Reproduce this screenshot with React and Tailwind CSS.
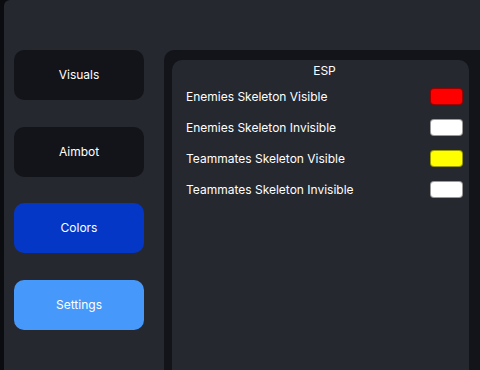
import React from "react";

const tabs = [
  { name: "Visuals", cls: "bg-[#131419]" },
  { name: "Aimbot", cls: "bg-[#131419]" },
  { name: "Colors", cls: "bg-[#0537c6]" },
  { name: "Settings", cls: "bg-[#4699fb]" },
];

const rows = [
  { label: "Enemies Skeleton Visible", color: "bg-[#ff0000]" },
  { label: "Enemies Skeleton Invisible", color: "bg-white" },
  { label: "Teammates Skeleton Visible", color: "bg-[#ffff00]" },
  { label: "Teammates Skeleton Invisible", color: "bg-white" },
];

const App = () => {
  return (
    <div
      className="h-[370px] w-[480px] overflow-hidden bg-[#0b0c10] pl-[4px]"
      style={{ fontFamily: "Inter, 'Noto Sans', sans-serif" }}
    >
      <div className="flex h-full rounded-tl-[6px] bg-[#262830] pt-[50px] pl-[10px]">
        {/* sidebar */}
        <div className="flex w-[130px] shrink-0 flex-col gap-[26.7px]">
          {tabs.map((t) => (
            <button
              key={t.name}
              className={`flex h-[50px] items-center justify-center rounded-[10px] text-[12px] text-white ${t.cls}`}
            >
              {t.name}
            </button>
          ))}
        </div>

        {/* content */}
        <div className="ml-[20px] flex-1 rounded-tl-[10px] bg-[#131419] pt-[10px] pl-[8px] pr-[11px]">
          <div className="h-full rounded-t-[10px] bg-[#262830] pl-[14px] pr-[6px]">
            <div className="pt-[3px] text-center text-[12px] leading-[16px] text-white">ESP</div>
            <div className="mt-[9px] flex flex-col gap-[14px]">
              {rows.map((r) => (
                <div key={r.label} className="flex h-[17px] items-center justify-between">
                  <span className="text-[12px] text-white">{r.label}</span>
                  <span className={`block h-[17px] w-[33px] rounded-[4px] border border-black/40 ${r.color}`} />
                </div>
              ))}
            </div>
          </div>
        </div>
      </div>
    </div>
  );
};

export default App;
